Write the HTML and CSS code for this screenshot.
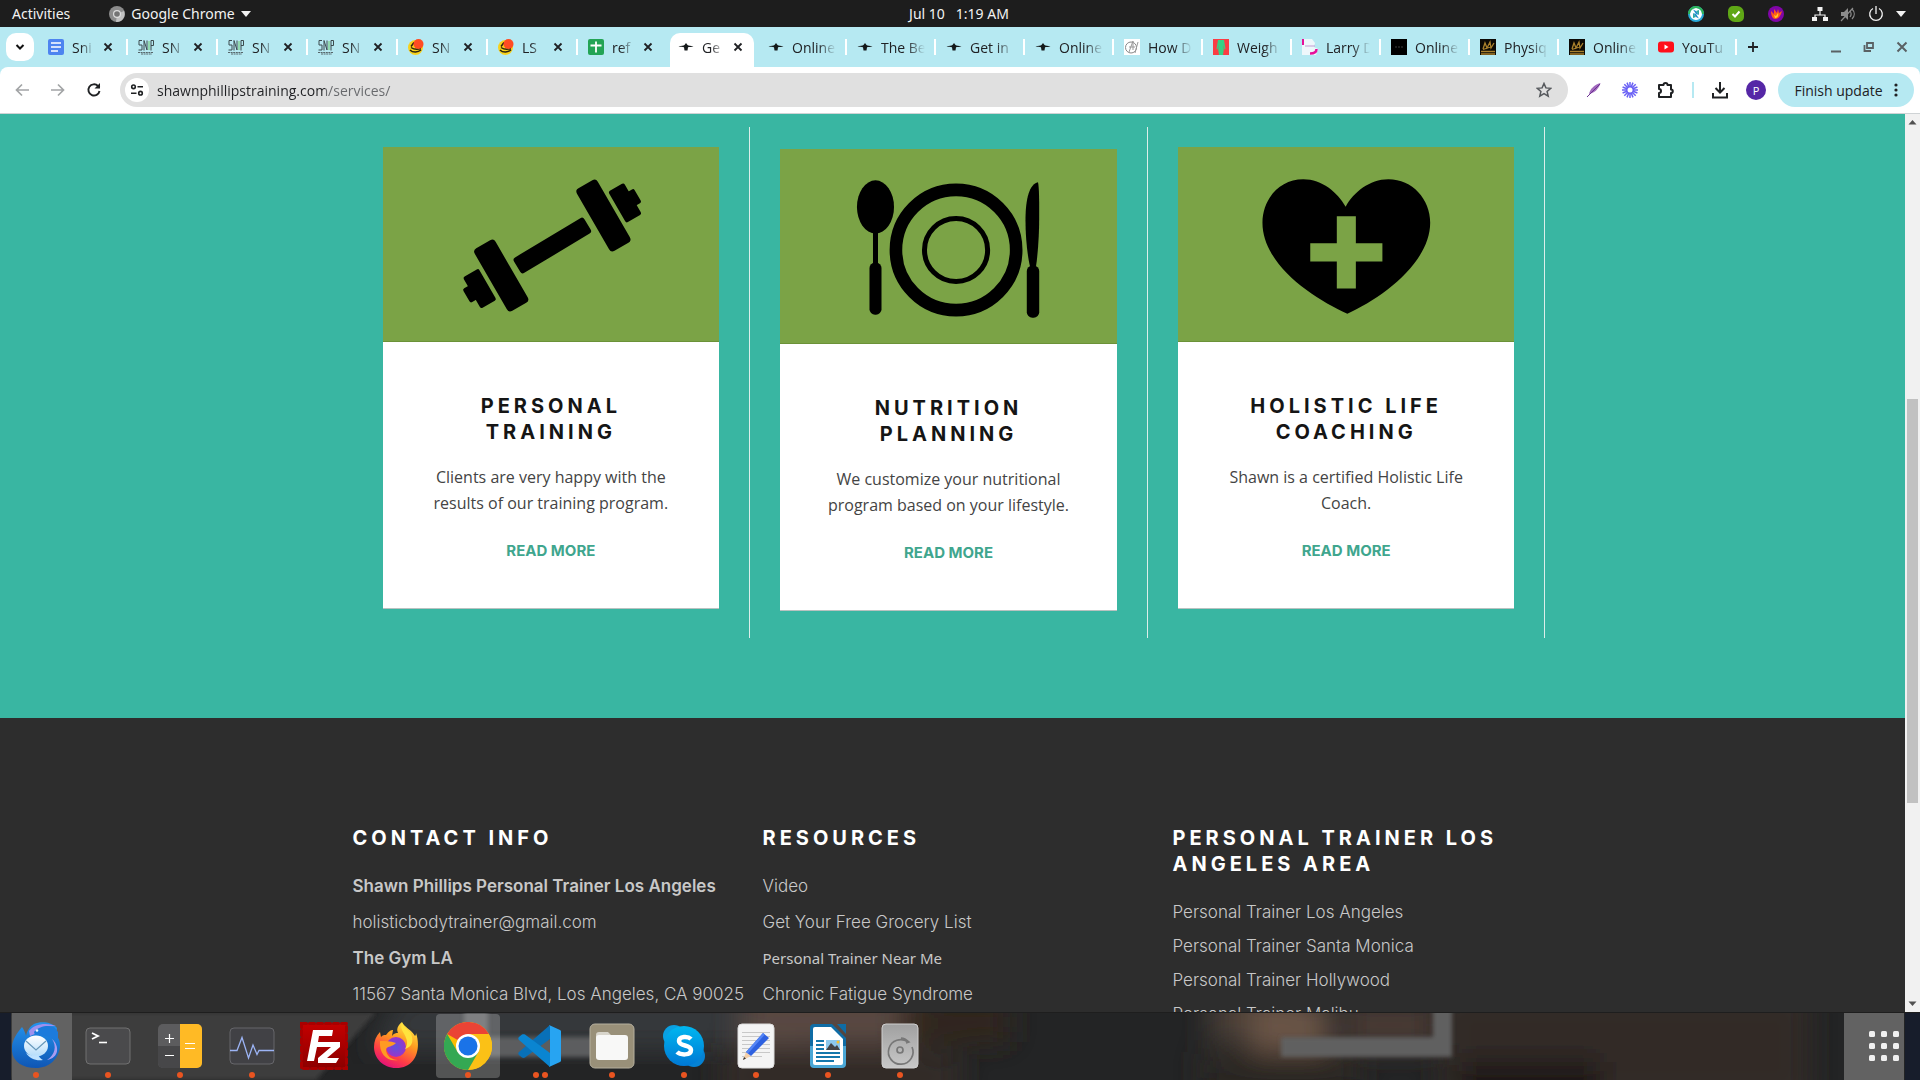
FILE: index.html
```html
<!DOCTYPE html>
<html lang="en">
<head>
<meta charset="utf-8">
<title>Services</title>
<link rel="stylesheet" href="styles.css">
</head>
<body>
<svg class="defs" aria-hidden="true">
  <defs>
    <linearGradient id="g-bird" x1="0" y1="0" x2="0" y2="1"><stop offset="0" stop-color="#2393ee"/><stop offset="1" stop-color="#0f56b4"/></linearGradient>
    <linearGradient id="g-mail" x1="0" y1="0" x2="0" y2="1"><stop offset="0" stop-color="#fff"/><stop offset="1" stop-color="#b4dcfa"/></linearGradient>
    <linearGradient id="g-fz" x1="0" y1="0" x2="0" y2="1"><stop offset="0" stop-color="#c40000"/><stop offset="1" stop-color="#8c0000"/></linearGradient>
    <linearGradient id="g-fox" x1=".8" y1="0" x2=".3" y2="1"><stop offset="0" stop-color="#fff04a"/><stop offset=".4" stop-color="#ff9a1f"/><stop offset=".75" stop-color="#ff3b47"/><stop offset="1" stop-color="#e0107d"/></linearGradient>
    <radialGradient id="g-globe"><stop offset="0" stop-color="#5b54e0"/><stop offset="1" stop-color="#9a35c8"/></radialGradient>
    <linearGradient id="g-skype" x1="0" y1="0" x2="0" y2="1"><stop offset="0" stop-color="#00b7f0"/><stop offset="1" stop-color="#0078d4"/></linearGradient>
    <linearGradient id="g-disk" x1="0" y1="0" x2="0" y2="1"><stop offset="0" stop-color="#a0a0a0"/><stop offset="1" stop-color="#c8c8c8"/></linearGradient>
    <linearGradient id="g-writer" x1="0" y1="0" x2="0" y2="1"><stop offset=".5" stop-color="#0f6ca5"/><stop offset=".5" stop-color="#4aa7d6"/></linearGradient>
    <filter id="soft" x="-20%" y="-20%" width="140%" height="140%"><feGaussianBlur stdDeviation="14"/></filter>
    <filter id="edge"><feGaussianBlur stdDeviation="2"/></filter>
    <symbol id="i-close" viewBox="0 0 16 16"><path d="M4.500 4.500l7 7M11.500 4.500l-7 7" stroke="#202124" stroke-width="1.800"/></symbol>
    <symbol id="i-docs" viewBox="0 0 16 16"><rect width="16" height="16" rx="2" fill="#4d84f0"/><path d="M3 4h10M3 8h10M3 12h7" stroke="#fff" stroke-width="1.600"/></symbol>
    <symbol id="i-snip" viewBox="0 0 16 16"><path d="M4 1.500H1v4.500h3v5H0.500M6 11.500V1.500l3 9.500V1.500M13 11.500V1.500h2.500v5H13" fill="none" stroke="#3c4a4e" stroke-width="1"/><path d="M11 2v9" stroke="#7fd48c" stroke-width="1.300"/><path d="M0 13.500h15M3 15h11" stroke="#56666b" stroke-width="1" stroke-dasharray="2 .6"/></symbol>
    <symbol id="i-burger" viewBox="0 0 16 16"><circle cx="7.500" cy="8.500" r="7.500" fill="#f8d21c"/><path d="M3 7.500l3-4M2 11c3 3 8 2.500 11 0M3 8.500c3 2 7 2 10 1" fill="none" stroke="#2a2410" stroke-width="1.500"/><circle cx="10.500" cy="5" r="5" fill="#ff4b22"/></symbol>
    <symbol id="i-sheet" viewBox="0 0 16 16"><rect width="16" height="16" rx="2" fill="#23a455"/><path d="M8 2.500v11M2.500 6.500h11" stroke="#fff" stroke-width="1.800"/></symbol>
    <symbol id="i-plane" viewBox="0 0 16 16"><path d="M0.500 7.300c3-.6 5-.6 6-1.300l1.500-2 1.500 2c1 .7 3 .7 6 1.300-2 .8-4 .8-5.500 1l-.5 3.200h-3l-.5-3.200C4.500 8.100 2.500 8.100.5 7.300z" fill="#14191a"/></symbol>
    <symbol id="i-script" viewBox="0 0 16 16"><rect width="16" height="16" fill="#fff"/><circle cx="7" cy="8.500" r="5.500" fill="none" stroke="#888"/><path d="M5 13L9 2v9M5 8h6M11 14l3-11" stroke="#999" fill="none"/></symbol>
    <symbol id="i-body" viewBox="0 0 16 16"><rect width="16" height="16" fill="#fb3c44"/><path d="M5 1h6l1.500 9-1 .5-1-5 .3 5-.8 5.500H6l-.8-5.500.3-5-1 5-1-.5z" fill="#35d285"/></symbol>
    <symbol id="i-larry" viewBox="0 0 16 16"><path d="M0 0h10l3 4-1 4 4 2-2 6H0z" fill="#eef7fb"/><path d="M1 0v6" stroke="#e5109a" stroke-width="2"/><path d="M14.500 10c0 3-2 4.500-6.500 4.500" fill="none" stroke="#e5109a" stroke-width="2.500"/><path d="M3 7h10" stroke="#c39bd2"/></symbol>
    <symbol id="i-black" viewBox="0 0 16 16"><rect width="16" height="16" fill="#000"/><path d="M4 8h8" stroke="#3c3c3c" stroke-dasharray="2 1"/></symbol>
    <symbol id="i-gold" viewBox="0 0 16 16"><rect width="16" height="16" fill="#0c0a06"/><path d="M3 10l2-6 2 5 3-6 1 6 3-5M1 12.500h14M1 15h14M3 10.500l9-3" fill="none" stroke="#a9802c" stroke-width="1.300"/></symbol>
    <symbol id="i-youtube" viewBox="0 0 16 16"><rect y="2.500" width="16" height="11" rx="3" fill="#ff0f1a"/><path d="M6.500 5.500v5l4-2.500z" fill="#fff"/></symbol>
  </defs>
</svg>

<header class="topbar">
  <div class="topbar-left">
    <button class="top-btn">Activities</button>
    <button class="top-btn app-menu">
      <svg width="16" height="16" viewBox="0 0 16 16"><circle cx="8" cy="8" r="8" fill="#8c8c8c"/><path d="M8 8l7-3a8 8 0 0 1-8 11z" fill="#c0c0c0"/><circle cx="8" cy="8" r="4" fill="#ddd"/><circle cx="8" cy="8" r="2.800" fill="#747474"/></svg>
      Google Chrome
      <svg width="10" height="6" viewBox="0 0 10 6"><path d="M0 0h10L5 6z" fill="#f2f2f2"/></svg>
    </button>
  </div>
  <button class="top-btn clock"><span>Jul 10</span><span>1:19 AM</span></button>
  <div class="tray">
    <svg class="tray-app" width="16" height="16" viewBox="0 0 16 16"><circle cx="8" cy="8" r="7" fill="#fff" stroke="#28a8d8" stroke-width="2"/><path d="M1 8a7 7 0 0 1 14 0" fill="none" stroke="#2fb457" stroke-width="2"/><path d="M5 3.500l3 1.500 3 4-3-1zM11 12.500L8 11 5 7l3 1z" fill="#1f8ecb"/><path d="M8 5l3-1v5zM8 11l-3 1V7z" fill="#2fa8a0"/></svg>
    <svg class="tray-app" width="16" height="16" viewBox="0 0 16 16"><path d="M5 0a5 5 0 0 0-5 5v4a7 7 0 0 0 7 7h4a5 5 0 0 0 5-5V7a7 7 0 0 0-7-7z" fill="#5fa716"/><path d="M4.500 8l2.500 2.500L11.500 5.500" fill="none" stroke="#fff" stroke-width="2"/></svg>
    <svg class="tray-app" width="16" height="16" viewBox="0 0 16 16"><circle cx="8" cy="8" r="8" fill="#8105a8"/><path d="M3 5l3 3V3l3 4 1-4 1 4 3-2c-1 4-3 8-7 8-2 0-4-3-4-8z" fill="#ff5a1c"/><path d="M6 9l2 1 2-3c1 3-1 5-3 5z" fill="#ffd21f"/></svg>
    <svg class="tray-net" width="16" height="16" viewBox="0 0 16 16"><path d="M8 4v5M3 12V9h10v3" fill="none" stroke="#f2f2f2" stroke-width="1.200"/><path d="M5.500 1h5v4h-5zM0 11h5v4H0zM11 11h5v4h-5z" fill="#f2f2f2"/></svg>
    <svg width="16" height="16" viewBox="0 0 16 16"><path d="M1 6h3l4-4v12l-4-4H1z" fill="#8c8c8c"/><path d="M10 5c1.500 2 1.500 4 0 6M12 3c3 3 3 7 0 10M1 15L13 2" fill="none" stroke="#8c8c8c" stroke-width="1.200"/></svg>
    <svg width="16" height="16" viewBox="0 0 16 16"><path d="M5 2.500a6.300 6.300 0 1 0 6 0M8 0v8" fill="none" stroke="#f2f2f2" stroke-width="1.300"/></svg>
    <svg width="10" height="6" viewBox="0 0 10 6"><path d="M0 0h10L5 6z" fill="#f2f2f2"/></svg>
  </div>
</header>

<div class="browser">
  <nav class="tabstrip" aria-label="Tabs">
    <button class="tab-search" aria-label="Search tabs"><svg width="10" height="10" viewBox="0 0 10 10"><path d="M1.500 3l3.500 3.500L8.500 3" fill="none" stroke="#111" stroke-width="2"/></svg></button>
    <div class="tabs">
      <div class="tab"><svg class="fav"><use href="#i-docs"/></svg><a href="#" class="tab-title">Sni</a><button class="close" aria-label="Close"><svg><use href="#i-close"/></svg></button></div>
      <div class="tab"><svg class="fav"><use href="#i-snip"/></svg><a href="#" class="tab-title">SN</a><button class="close" aria-label="Close"><svg><use href="#i-close"/></svg></button></div>
      <div class="tab"><svg class="fav"><use href="#i-snip"/></svg><a href="#" class="tab-title">SN</a><button class="close" aria-label="Close"><svg><use href="#i-close"/></svg></button></div>
      <div class="tab"><svg class="fav"><use href="#i-snip"/></svg><a href="#" class="tab-title">SN</a><button class="close" aria-label="Close"><svg><use href="#i-close"/></svg></button></div>
      <div class="tab"><svg class="fav"><use href="#i-burger"/></svg><a href="#" class="tab-title">SN</a><button class="close" aria-label="Close"><svg><use href="#i-close"/></svg></button></div>
      <div class="tab"><svg class="fav"><use href="#i-burger"/></svg><a href="#" class="tab-title">LS</a><button class="close" aria-label="Close"><svg><use href="#i-close"/></svg></button></div>
      <div class="tab before-active"><svg class="fav"><use href="#i-sheet"/></svg><a href="#" class="tab-title">ref</a><button class="close" aria-label="Close"><svg><use href="#i-close"/></svg></button></div>
      <div class="tab active"><svg class="fav"><use href="#i-plane"/></svg><a href="#" class="tab-title">Ge</a><button class="close" aria-label="Close"><svg><use href="#i-close"/></svg></button></div>
      <div class="tab wide"><svg class="fav"><use href="#i-plane"/></svg><a href="#" class="tab-title">Online</a></div>
      <div class="tab wide"><svg class="fav"><use href="#i-plane"/></svg><a href="#" class="tab-title">The Be</a></div>
      <div class="tab wide"><svg class="fav"><use href="#i-plane"/></svg><a href="#" class="tab-title">Get in</a></div>
      <div class="tab wide"><svg class="fav"><use href="#i-plane"/></svg><a href="#" class="tab-title">Online</a></div>
      <div class="tab wide"><svg class="fav"><use href="#i-script"/></svg><a href="#" class="tab-title">How D</a></div>
      <div class="tab wide"><svg class="fav"><use href="#i-body"/></svg><a href="#" class="tab-title">Weigh</a></div>
      <div class="tab wide"><svg class="fav"><use href="#i-larry"/></svg><a href="#" class="tab-title">Larry D</a></div>
      <div class="tab wide"><svg class="fav"><use href="#i-black"/></svg><a href="#" class="tab-title">Online</a></div>
      <div class="tab wide"><svg class="fav"><use href="#i-gold"/></svg><a href="#" class="tab-title">Physiq</a></div>
      <div class="tab wide"><svg class="fav"><use href="#i-gold"/></svg><a href="#" class="tab-title">Online</a></div>
      <div class="tab wide"><svg class="fav"><use href="#i-youtube"/></svg><a href="#" class="tab-title">YouTu</a></div>
    </div>
    <button class="new-tab" aria-label="New tab"><svg width="12" height="12" viewBox="0 0 12 12"><path d="M6 1v10M1 6h10" stroke="#202124" stroke-width="1.800"/></svg></button>
    <div class="window-controls">
      <button aria-label="Minimize"><svg width="12" height="12" viewBox="0 0 12 12"><path d="M1 10.500h10" stroke="#5a6164" stroke-width="2"/></svg></button>
      <button aria-label="Restore"><svg width="12" height="12" viewBox="0 0 12 12"><path d="M4 2h6v5H4zM1.500 4v6H8" fill="none" stroke="#5a6164" stroke-width="1.800"/></svg></button>
      <button aria-label="Close window"><svg width="12" height="12" viewBox="0 0 12 12"><path d="M1.500 1.500l9 9M10.500 1.500l-9 9" stroke="#5a6164" stroke-width="2"/></svg></button>
    </div>
  </nav>

  <div class="toolbar">
    <button class="nav-btn" aria-label="Back"><svg width="16" height="16" viewBox="0 0 16 16"><path d="M15 8H2.500M8 2.500L2.500 8 8 13.500" fill="none" stroke="#a2a4a6" stroke-width="1.700"/></svg></button>
    <button class="nav-btn" aria-label="Forward"><svg width="16" height="16" viewBox="0 0 16 16"><path d="M1 8h12.500M8 2.500L13.500 8 8 13.500" fill="none" stroke="#a2a4a6" stroke-width="1.700"/></svg></button>
    <button class="nav-btn" aria-label="Reload"><svg width="16" height="16" viewBox="0 0 16 16"><path d="M13.500 9A5.600 5.600 0 1 1 12 4l1.500 1.500" fill="none" stroke="#1f2123" stroke-width="1.900"/><path d="M14 1v5.500H8.500z" fill="#1f2123"/></svg></button>
    <form class="omnibox">
      <button type="button" class="site-info" aria-label="Site information"><svg width="14" height="14" viewBox="0 0 14 14"><g fill="none" stroke="#1f2123" stroke-width="1.600"><circle cx="3.500" cy="3.800" r="1.800"/><path d="M7.500 3.800H13M1 10.200h5.500"/><circle cx="10.500" cy="10.200" r="1.800"/></g></svg></button>
      <input class="url" type="text" aria-label="Address" value="shawnphillipstraining.com/services/">
      <button type="button" class="star" aria-label="Bookmark"><svg width="16" height="16" viewBox="0 0 16 16"><path d="M8 1.500l1.900 4.400 4.800.4-3.600 3.200 1.100 4.700L8 11.700l-4.200 2.500 1.100-4.700L1.300 6.300l4.800-.4z" fill="none" stroke="#55585c" stroke-width="1.500"/></svg></button>
    </form>
    <div class="extensions">
      <button aria-label="Feather"><svg width="16" height="16" viewBox="0 0 16 16"><path d="M14.500 1C8 3 4 7 3 12c5-1 10-5 11.500-11z" fill="#a169bd"/><path d="M1 15L14 2" stroke="#6c3391"/></svg></button>
      <button aria-label="Loom"><svg width="16" height="16" viewBox="0 0 16 16"><g stroke="#6a61f5" stroke-width="1.500"><path d="M8 0v16M0 8h16M2.300 2.300l11.400 11.400M13.700 2.300L2.300 13.700M5 .6l6 14.800M11 .6L5 15.400M.6 5l14.800 6M15.400 5L.6 11"/></g><circle cx="8" cy="8" r="2.500" fill="#fff"/></svg></button>
      <button aria-label="Extensions"><svg width="18" height="18" viewBox="0 0 18 18"><path d="M2 4h4.500a2 2 0 0 1 4 0H14v4.500a1.800 1.800 0 0 1 0 3.600V16H2v-4a2 2 0 0 0 0-4z" fill="none" stroke="#1f2123" stroke-width="2" stroke-linejoin="round"/></svg></button>
      <span class="divider"></span>
      <button aria-label="Downloads"><svg width="18" height="18" viewBox="0 0 18 18"><path d="M9 1v10M4.500 7L9 11.500 13.500 7M2 12v4.500h14V12" fill="none" stroke="#1f2123" stroke-width="2"/></svg></button>
      <button class="profile">P</button>
    </div>
    <button class="update">Finish update<svg width="4" height="16" viewBox="0 0 4 16"><g fill="#202124"><circle cx="2" cy="3" r="1.600"/><circle cx="2" cy="8" r="1.600"/><circle cx="2" cy="13" r="1.600"/></g></svg></button>
  </div>

  <div class="viewport">
    <main class="page">
      <section class="services">
        <div class="container service-grid">
          <div class="service-col">
            <article class="card">
              <svg class="art" viewBox="0 0 336 195" preserveAspectRatio="xMidYMid slice"><g>
                <rect x="-41" y="-9" width="82" height="18" rx="3" transform="translate(169 99) rotate(-31)"/>
                <rect x="-12" y="-36" width="24" height="72" rx="4" transform="translate(220 69) rotate(-30)"/>
                <rect x="-12" y="-36" width="24" height="72" rx="4" transform="translate(118 129) rotate(-30)"/>
                <rect x="-9" y="-18" width="18" height="36" rx="2" transform="translate(241.500 56.500) rotate(-30)"/>
                <rect x="-9" y="-18" width="18" height="36" rx="2" transform="translate(96.500 142) rotate(-30)"/>
                <rect x="-6" y="-8" width="12" height="16" rx="2" transform="translate(249 52) rotate(-30)"/>
                <rect x="-6" y="-8" width="12" height="16" rx="2" transform="translate(88.500 146.500) rotate(-30)"/>
              </g></svg>
              <div class="card-body">
                <h3>PERSONAL<br>TRAINING</h3>
                <p>Clients are very happy with the<br>results of our training program.</p>
                <a href="#">READ MORE</a>
              </div>
            </article>
          </div>
          <div class="service-col lower">
            <article class="card">
              <svg class="art" viewBox="0 0 336 195" preserveAspectRatio="xMidYMid slice">
                <ellipse cx="95.300" cy="58.500" rx="18.500" ry="26.500"/><rect x="92.800" y="80" width="5" height="40"/><rect x="89.300" y="114" width="12" height="52" rx="5.500"/>
                <circle cx="175.700" cy="101.500" r="60" fill="none" stroke="#000" stroke-width="12.600"/><circle cx="175.700" cy="101.500" r="31.500" fill="none" stroke="#000" stroke-width="5"/>
                <path d="M257.500 34C249 36 245 50 245 72c0 18 2 35 4.500 46h6c2-14 3.200-32 3.200-50 0-14 0-28-1.200-34z"/><rect x="246.300" y="117" width="12.400" height="52" rx="5.500"/>
              </svg>
              <div class="card-body">
                <h3>NUTRITION<br>PLANNING</h3>
                <p>We customize your nutritional<br>program based on your lifestyle.</p>
                <a href="#">READ MORE</a>
              </div>
            </article>
          </div>
          <div class="service-col">
            <article class="card">
              <svg class="art" viewBox="0 0 336 195" preserveAspectRatio="xMidYMid slice">
                <path d="M167.300 60.300C159 46 144 33 125 33c-24 0-40.700 20-40.700 43.300C84.300 118 135 152 169 167c34-15 82.700-51 82.700-90.700C251.700 53 234 33 210 33c-19 0-34.700 13-42.700 27.300z"/>
                <path d="M158.500 69.700h19v27h26.500V115h-26.500v27h-19v-27H132V96.700h26.500z" fill="#7ba346"/>
              </svg>
              <div class="card-body">
                <h3>HOLISTIC LIFE<br>COACHING</h3>
                <p>Shawn is a certified Holistic Life<br>Coach.</p>
                <a href="#">READ MORE</a>
              </div>
            </article>
          </div>
        </div>
      </section>
      <footer class="site-footer">
        <div class="container footer-grid">
          <div class="footer-col">
            <h4>CONTACT INFO</h4>
            <p><strong>Shawn Phillips Personal Trainer Los Angeles</strong></p>
            <p><a href="#">holisticbodytrainer@gmail.com</a></p>
            <p><strong>The Gym LA</strong></p>
            <p>11567 Santa Monica Blvd, Los Angeles, CA 90025</p>
          </div>
          <div class="footer-col">
            <h4>RESOURCES</h4>
            <p><a href="#">Video</a></p>
            <p><a href="#">Get Your Free Grocery List</a></p>
            <p class="small"><a href="#">Personal Trainer Near Me</a></p>
            <p><a href="#">Chronic Fatigue Syndrome</a></p>
          </div>
          <div class="footer-col areas">
            <h4>PERSONAL TRAINER LOS<br>ANGELES AREA</h4>
            <p><a href="#">Personal Trainer Los Angeles</a></p>
            <p><a href="#">Personal Trainer Santa Monica</a></p>
            <p><a href="#">Personal Trainer Hollywood</a></p>
            <p><a href="#">Personal Trainer Malibu</a></p>
          </div>
        </div>
      </footer>
    </main>
    <div class="scrollbar" aria-hidden="true">
      <svg width="15" height="17" viewBox="0 0 15 17"><path d="M3.500 10.500h8L7.500 6z" fill="#505050"/></svg>
      <div class="track"><span class="space-above"></span><span class="thumb"></span><span class="space-below"></span></div>
      <svg width="15" height="17" viewBox="0 0 15 17"><path d="M3.500 6.500h8L7.500 11z" fill="#505050"/></svg>
    </div>
  </div>
</div>

<nav class="dock" aria-label="Dock">
  <svg class="dock-bg" viewBox="0 0 1920 68" preserveAspectRatio="none" aria-hidden="true">
    <rect width="1920" height="68" fill="#232425"/>
    <path d="M400-20h400v60H370z" fill="#34383a" filter="url(#soft)"/>
    <path d="M0 0h376l-60 68H0z" fill="#3c3c3c" filter="url(#edge)"/>
    <g filter="url(#soft)">
      <path d="M740-20h180v55H740z" fill="#5a4943"/><path d="M720 40h240v50H720z" fill="#302926"/>
      <path d="M900-10h110v40H900z" fill="#33261f"/><path d="M1210-20h90v50h-90z" fill="#4c4038"/>
      <path d="M1250-10h80v50h-80z" fill="#6a5446"/><path d="M1345-10h90v46h-90z" fill="#4a3a34"/>
      <path d="M1200 40h160v40h-160z" fill="#2c2624"/><path d="M1440-20h370v110h-370z" fill="#302c27"/>
      <path d="M1460 50h140v40h-140z" fill="#1a1918"/>
    </g>
    <g filter="url(#edge)"><path d="M464-5h24v30h118v20H464z" fill="#5c5d5e"/><path d="M1433-5h19v50h-171V25h152z" fill="#606060"/></g>
    <path d="M0 0h11v68H0zM1905 0h15v68h-15z" fill="#171d2b"/>
    <path d="M12 0h60v68H12zM1844 0h60v68h-60z" fill="#626262"/>
    <path d="M0 .5h1920" stroke="#1e1e1e"/>
  </svg>
  <div class="launchers">
    <button class="app" aria-label="Thunderbird"><svg viewBox="0 0 48 48"><path d="M10 5c-6 7-11 15-10 24 1 11 11 17 24 17s23-9 24-22c0-5-1-8-4-10l1-8c-5-6-16-7-23-4-4 2-7 7-8 12-1-4-2-6-4-9z" fill="url(#g-bird)"/><path d="M17 9c5-7 17-9 27-5-8 0-12 1-14 4l-5 3-7 3z" fill="#9f91ee"/><path d="M22 10c5-6 14-7 20-5l4 5v9c-7-5-15-5-23-6z" fill="#1c7bdc"/><circle cx="25" cy="8.500" r="1.300" fill="#e8f3ff"/><path d="M35 38c8-5 10-14 5-21 8 7 7 19-5 21z" fill="#a99cf0"/><ellipse cx="24" cy="24" rx="12" ry="10.500" fill="url(#g-mail)"/><path d="M14 19l10 9 10-9" fill="none" stroke="#6798ba" stroke-width="1.200"/><path d="M14 31c5 3 9 3 12 2 2 3 3 4 5 5-7 1-13-1-17-7z" fill="#bfe2ff"/></svg><i class="dots one"></i></button>
    <button class="app" aria-label="Terminal"><svg viewBox="0 0 48 48"><rect x="2" y="6" width="44" height="36" rx="4" fill="#4a4a4c" stroke="#717171"/><path d="M8 11l6 3-6 3" fill="none" stroke="#fff" stroke-width="1.800"/><path d="M15 20.500h8" stroke="#fff" stroke-width="1.600"/></svg><i class="dots one"></i></button>
    <button class="app" aria-label="Calculator"><svg viewBox="0 0 48 48"><rect x="2" y="2" width="44" height="44" rx="5" fill="#5c5c5e"/><path d="M2 24h22v22H7a5 5 0 0 1-5-5z" fill="#474749"/><path d="M24 2h17a5 5 0 0 1 5 5v34a5 5 0 0 1-5 5H24z" fill="#ffba25"/><path d="M9 16.500h9M13.500 12v9M9 33.500h9M29 21.500h10M29 26.500h10" stroke="#fff" stroke-width="1.200"/></svg><i class="dots one"></i></button>
    <button class="app" aria-label="System Monitor"><svg viewBox="0 0 48 48"><rect x="2" y="6" width="44" height="36" rx="4" fill="#414145" stroke="#66666a"/><path d="M2 28.500h7l5-13 6.500 20.500 4.500-13 4 9.500 2-4h15" fill="none" stroke="#9cb4f5" stroke-width="1.300"/></svg><i class="dots one"></i></button>
    <button class="app" aria-label="FileZilla"><svg viewBox="0 0 48 48"><rect x="1.500" y="1.500" width="45" height="45" fill="url(#g-fz)" stroke="#a80000" stroke-width="3" stroke-dasharray="5 3" stroke-linecap="round"/><path d="M13 8h20l-1 6H19l-1 6h9l-1 5h-9l-3 14H7z" fill="#fff"/><path d="M26 20h14v5L27 36h12l-3 5H18v-5l13-11h-6z" fill="#fff"/></svg></button>
    <button class="app" aria-label="Firefox"><svg viewBox="0 0 48 48"><path d="M24 46C11 46 2 36 2 25c0-6 2-11 6-15l1 5c2-2 3-2 5-2 3-4 5-5 7-5l-1 6c2-3 4-3 6-3-2-4 0-8 4-11 2 5 10 8 13 14 1-1 1-2 1-3 5 14 1 35-20 35z" fill="url(#g-fox)"/><circle cx="24" cy="25" r="10" fill="url(#g-globe)"/><path d="M8 19c5 0 10 0 16 2-4 4-8 3-10 6 0 7 6 11 12 11-11 2-19-6-18-19z" fill="#ff9a22"/><path d="M30 1c-3 6 3 10 4 15 2 4 1 8-1 11 10-3 8-12 5-17-3-3-6-5-8-9z" fill="#ffe33d"/></svg></button>
    <button class="app current" aria-label="Google Chrome"><svg viewBox="0 0 48 48"><circle cx="24" cy="24" r="24" fill="#fbbc04"/><path d="M24 24L3.200 12A24 24 0 0 1 44.800 12z" fill="#ea4335"/><path d="M24 12h20.800A24 24 0 0 1 24 48l10.400-18z" fill="#fbc116"/><path d="M3.200 12A24 24 0 0 0 24 48l10.400-18H13.600z" fill="#34a853"/><circle cx="24" cy="24" r="12" fill="#fff"/><circle cx="24" cy="24" r="9.500" fill="#1a73e8"/></svg><i class="dots one"></i></button>
    <button class="app" aria-label="Visual Studio Code"><svg viewBox="0 0 48 48"><path d="M34 3L3 30c-1 1-1 2 0 3l3 2.500c1 .5 2 .5 3 0L34 17z" fill="#0870b8"/><path d="M34 45L3 18c-1-1-1-2 0-3l3-2.500c1-.5 2-.5 3 0L34 31z" fill="#0a85d1"/><path d="M33 3l11 5c1 .5 1 1 1 2v28c0 1 0 1.500-1 2l-11 5c1-1 1-2 1-3V6c0-1 0-2-1-3z" fill="#27a4f2"/></svg><i class="dots two"></i></button>
    <button class="app" aria-label="Files"><svg viewBox="0 0 48 48"><rect x="2" y="2" width="44" height="44" rx="5" fill="#999079" stroke="#b5af9e"/><path d="M8 13q0-3 3-3h9l3 3h13v9H8z" fill="#d8d5cb"/><rect x="8" y="13" width="32" height="25" rx="3" fill="#f8f8f7"/></svg><i class="dots one"></i></button>
    <button class="app" aria-label="Skype"><svg viewBox="0 0 48 48"><circle cx="14" cy="14" r="11" fill="#0aa0e2"/><circle cx="34" cy="34" r="11" fill="#0582d4"/><circle cx="24" cy="24" r="20" fill="url(#g-skype)"/><path d="M31 17c-3-3-12-3-12 2 0 6 12 3 12 9 0 6-11 5-14 2" fill="none" stroke="#fff" stroke-width="4.500"/></svg><i class="dots one"></i></button>
    <button class="app" aria-label="Text Editor"><svg viewBox="0 0 48 48"><rect x="6" y="2" width="36" height="44" rx="4" fill="#f4f4f4" stroke="#ddd"/><path d="M10 10.500h28M10 14.500h28M10 18.500h28M10 22.500h28M10 26.500h28M10 30.500h28M10 34.500h20" stroke="#c8c8c8"/><path d="M11 38l3-8 5 4z" fill="#f4cfa8"/><path d="M11 38l1-3 2 1.500z" fill="#333"/><path d="M14 30l17-19 6 5-18 18z" fill="#2e61e0"/><path d="M14 30l17-19 2 1.500-17 19z" fill="#5485f5"/></svg><i class="dots one"></i></button>
    <button class="app" aria-label="LibreOffice Writer"><svg viewBox="0 0 48 48"><path d="M10 2h18l14 14v26a4 4 0 0 1-4 4H10a4 4 0 0 1-4-4V6a4 4 0 0 1 4-4z" fill="url(#g-writer)"/><path d="M11 5h16l12 12v24a2 2 0 0 1-2 2H11a2 2 0 0 1-2-2V7a2 2 0 0 1 2-2z" fill="#fff"/><path d="M33 2h9v10z" fill="#0f6ca5"/><path d="M12 19h8M12 23h8M12 27h8M12 31h24M12 35h24M12 39h18" stroke="#1477ac" stroke-width="1.800"/><rect x="22" y="18" width="14" height="10" fill="#8cc9ed"/><path d="M22 28l5-7 4 4 2-2 3 5z" fill="#444"/><circle cx="34" cy="20" r="1.500" fill="#f6c02c"/></svg><i class="dots one"></i></button>
    <button class="app" aria-label="Disks"><svg viewBox="0 0 48 48"><rect x="6" y="2" width="36" height="44" rx="4" fill="url(#g-disk)" stroke="#cfcfcf"/><g fill="none" stroke="#777" stroke-width="1.700"><path d="M32 20a12.300 12.300 0 1 0 4 5M25 16c3 0 6 2 8 4l-3 1"/><circle cx="24" cy="28" r="3"/></g></svg><i class="dots one"></i></button>
  </div>
  <button class="show-apps" aria-label="Show applications"><svg width="32" height="32" viewBox="0 0 32 32"><g fill="#f0f0f0"><rect x="1" y="1" width="6" height="6" rx="1.500"/><rect x="13" y="1" width="6" height="6" rx="1.500"/><rect x="25" y="1" width="6" height="6" rx="1.500"/><rect x="1" y="13" width="6" height="6" rx="1.500"/><rect x="13" y="13" width="6" height="6" rx="1.500"/><rect x="25" y="13" width="6" height="6" rx="1.500"/><rect x="1" y="25" width="6" height="6" rx="1.500"/><rect x="13" y="25" width="6" height="6" rx="1.500"/><rect x="25" y="25" width="6" height="6" rx="1.500"/></g></svg></button>
</nav>
</body>
</html>
```
FILE: styles.css
```css
* { box-sizing: border-box; }

body {
  margin: 0;
  height: 100vh;
  display: flex;
  flex-direction: column;
  overflow: hidden;
  font-family: "Noto Sans", "Open Sans", sans-serif;
  font-size: 14px;
  background: #1d1d1d;
}

button {
  display: flex;
  align-items: center;
  justify-content: center;
  margin: 0;
  padding: 0;
  border: 0;
  background: none;
  font: inherit;
  color: inherit;
}

svg { display: block; flex: none; }
.defs { position: absolute; width: 0; height: 0; }

/* Desktop top bar */
.topbar {
  display: grid;
  grid-template-columns: 1fr auto 1fr;
  align-items: center;
  height: 27px;
  flex: none;
  padding: 0 14px 0 12px;
  color: #f2f2f2;
}
.topbar-left { display: flex; gap: 39px; }
.app-menu { gap: 6px; }
.clock { gap: 11px; }
.tray { display: flex; align-items: center; justify-content: flex-end; gap: 12px; }
.tray-app { margin-right: 12px; }
.tray-net { margin-left: 4px; }

/* Browser window */
.browser {
  flex: 1;
  min-height: 0;
  display: flex;
  flex-direction: column;
  background: #b6e9f2;
  font-family: "Open Sans", "Noto Sans", sans-serif;
}
.tabstrip {
  display: flex;
  align-items: center;
  height: 40px;
  flex: none;
  padding: 0 9px 0 6px;
}
.tab-search {
  width: 28px;
  height: 28px;
  border-radius: 10px;
  background: #fff;
}
.tabs { display: flex; align-self: stretch; padding-left: 4px; }
.tab {
  position: relative;
  display: flex;
  align-items: center;
  width: 90px;
  padding-left: 10px;
  color: #202124;
}
.tab.wide { width: 89px; }
.fav { width: 16px; height: 16px; margin-right: 8px; }
.tab-title {
  width: 22px;
  white-space: nowrap;
  color: inherit;
  text-decoration: none;
  -webkit-mask-image: linear-gradient(to right, #000 40%, transparent);
  mask-image: linear-gradient(to right, #000 40%, transparent);
}
.wide .tab-title {
  width: 44px;
  -webkit-mask-image: linear-gradient(to right, #000 60%, transparent);
  mask-image: linear-gradient(to right, #000 60%, transparent);
}
.close { width: 16px; height: 16px; margin-left: 6px; }
.close svg { width: 16px; height: 16px; }
.tab::after {
  content: "";
  position: absolute;
  right: 0;
  top: 12px;
  width: 2px;
  height: 16px;
  background: #fff;
}
.before-active::after, .active::after { display: none; }
.active::before {
  content: "";
  position: absolute;
  inset: 6px 4px 0 2px;
  border-radius: 10px 10px 0 0;
  background: #fff;
}
.active > * { position: relative; }
.new-tab { width: 32px; height: 28px; }
.window-controls { display: flex; gap: 21px; margin-left: auto; padding-right: 3px; }

.toolbar {
  display: flex;
  align-items: center;
  height: 47px;
  flex: none;
  padding: 0 6px 0 14px;
  border-bottom: 1px solid #cfd3d5;
  border-radius: 8px 8px 0 0;
  background: #fff;
  color: #202124;
}
.nav-btn { width: 16px; margin-right: 20px; }
.nav-btn + .nav-btn + .nav-btn { margin-right: 18px; }
.omnibox {
  flex: 1;
  display: flex;
  align-items: center;
  height: 34px;
  margin: 0;
  padding: 0 16px 0 5px;
  border-radius: 17px;
  background: #e0e0e0;
}
.site-info { width: 24px; height: 24px; border-radius: 12px; background: #fff; }
.url {
  flex: 1;
  height: 24px;
  margin-left: 8px;
  padding: 0;
  border: 0;
  outline: 0;
  font: inherit;
  color: #202124;
  background: linear-gradient(to right, #202124 168px, #67696c 168px);
  -webkit-background-clip: text;
  background-clip: text;
  -webkit-text-fill-color: transparent;
}
.extensions { display: flex; align-items: center; gap: 16px; padding: 0 12px 0 16px; }
.extensions button { width: 20px; height: 20px; }
.divider { width: 2px; height: 16px; background: #b6e9f2; }
.profile {
  border-radius: 10px;
  background: #5527a6;
  color: #fff;
  font-size: 11px;
}
.update {
  width: 136px;
  height: 34px;
  gap: 11px;
  border-radius: 17px;
  background: #b6e9f2;
}

/* Web page */
.viewport { flex: 1; min-height: 0; display: flex; }
.page { flex: 1; min-width: 0; overflow: hidden; background: #2d2d2d; }
.container { max-width: 1200px; margin: 0 auto; }
.services { padding: 13px 0 80px; background: #39b6a2; }
.service-grid { display: grid; grid-template-columns: repeat(3, 1fr); padding-right: 7px; }
.service-col {
  padding: 20px 30px 29px;
  border-right: 1px solid #dceeea;
}
.service-col.lower { padding: 22px 30px 27px; }
.card { background: #fff; border-bottom: 1px solid #b9c2c0; text-align: center; }
.art {
  width: 100%;
  height: 195px;
  background: #7ba346;
  border-bottom: 1px solid #6b9238;
}
.card-body { padding: 51px 24px 44px; }
h3, h4 {
  margin: 0;
  font-family: "Inter", "Open Sans", sans-serif;
  font-size: 20px;
  line-height: 26px;
  font-weight: 700;
  letter-spacing: 4px;
  white-space: nowrap;
}
h3 { color: #151515; }
.card-body p {
  margin: 19px 0 22px;
  font-family: "Open Sans", sans-serif;
  font-size: 16px;
  line-height: 26px;
  color: #444;
  white-space: nowrap;
}
.card-body a {
  display: block;
  font-family: "Inter", sans-serif;
  font-size: 15px;
  line-height: 26px;
  font-weight: 700;
  color: #3fa68e;
  text-decoration: none;
}
.site-footer { padding-top: 107px; font-family: "Inter", sans-serif; font-size: 17px; color: #c8c8c8; }
.footer-grid { display: grid; grid-template-columns: repeat(3, minmax(0, 1fr)); gap: 30px; }
.footer-col { white-space: nowrap; }
.footer-col h4 { margin-bottom: 22px; color: #fff; }
.footer-col p { margin: 0 0 10px; line-height: 26px; font-weight: 300; }
.footer-col.areas p { margin-bottom: 8px; }
.footer-col strong { font-weight: 600; }
.footer-col a { color: inherit; text-decoration: none; }
.footer-col .small { font-family: "Noto Sans", sans-serif; font-size: 15px; font-weight: 400; }

.scrollbar { display: flex; flex-direction: column; width: 15px; background: #f1f1f1; }
.track { flex: 1; display: flex; flex-direction: column; padding: 0 2px; }
.space-above { flex: 268; }
.thumb { flex: 404; background: #c1c1c1; }
.space-below { flex: 192; }

/* Dock */
.dock {
  position: relative;
  display: flex;
  justify-content: space-between;
  height: 68px;
  flex: none;
}
.dock-bg { position: absolute; inset: 0; width: 100%; height: 100%; }
.launchers { position: relative; display: flex; gap: 8px; padding: 2px 4px; }
.app { position: relative; width: 64px; height: 64px; border-radius: 4px; }
.app > svg { width: 48px; height: 48px; }
.app.current { background: rgba(255, 255, 255, 0.22); }
.dots {
  position: absolute;
  bottom: 0;
  left: 29px;
  width: 6px;
  height: 6px;
  border-radius: 3px;
  background: #e95420;
}
.dots.two { left: 25px; box-shadow: 9px 0 0 #e95420; }
.show-apps { position: relative; width: 73px; }
```
